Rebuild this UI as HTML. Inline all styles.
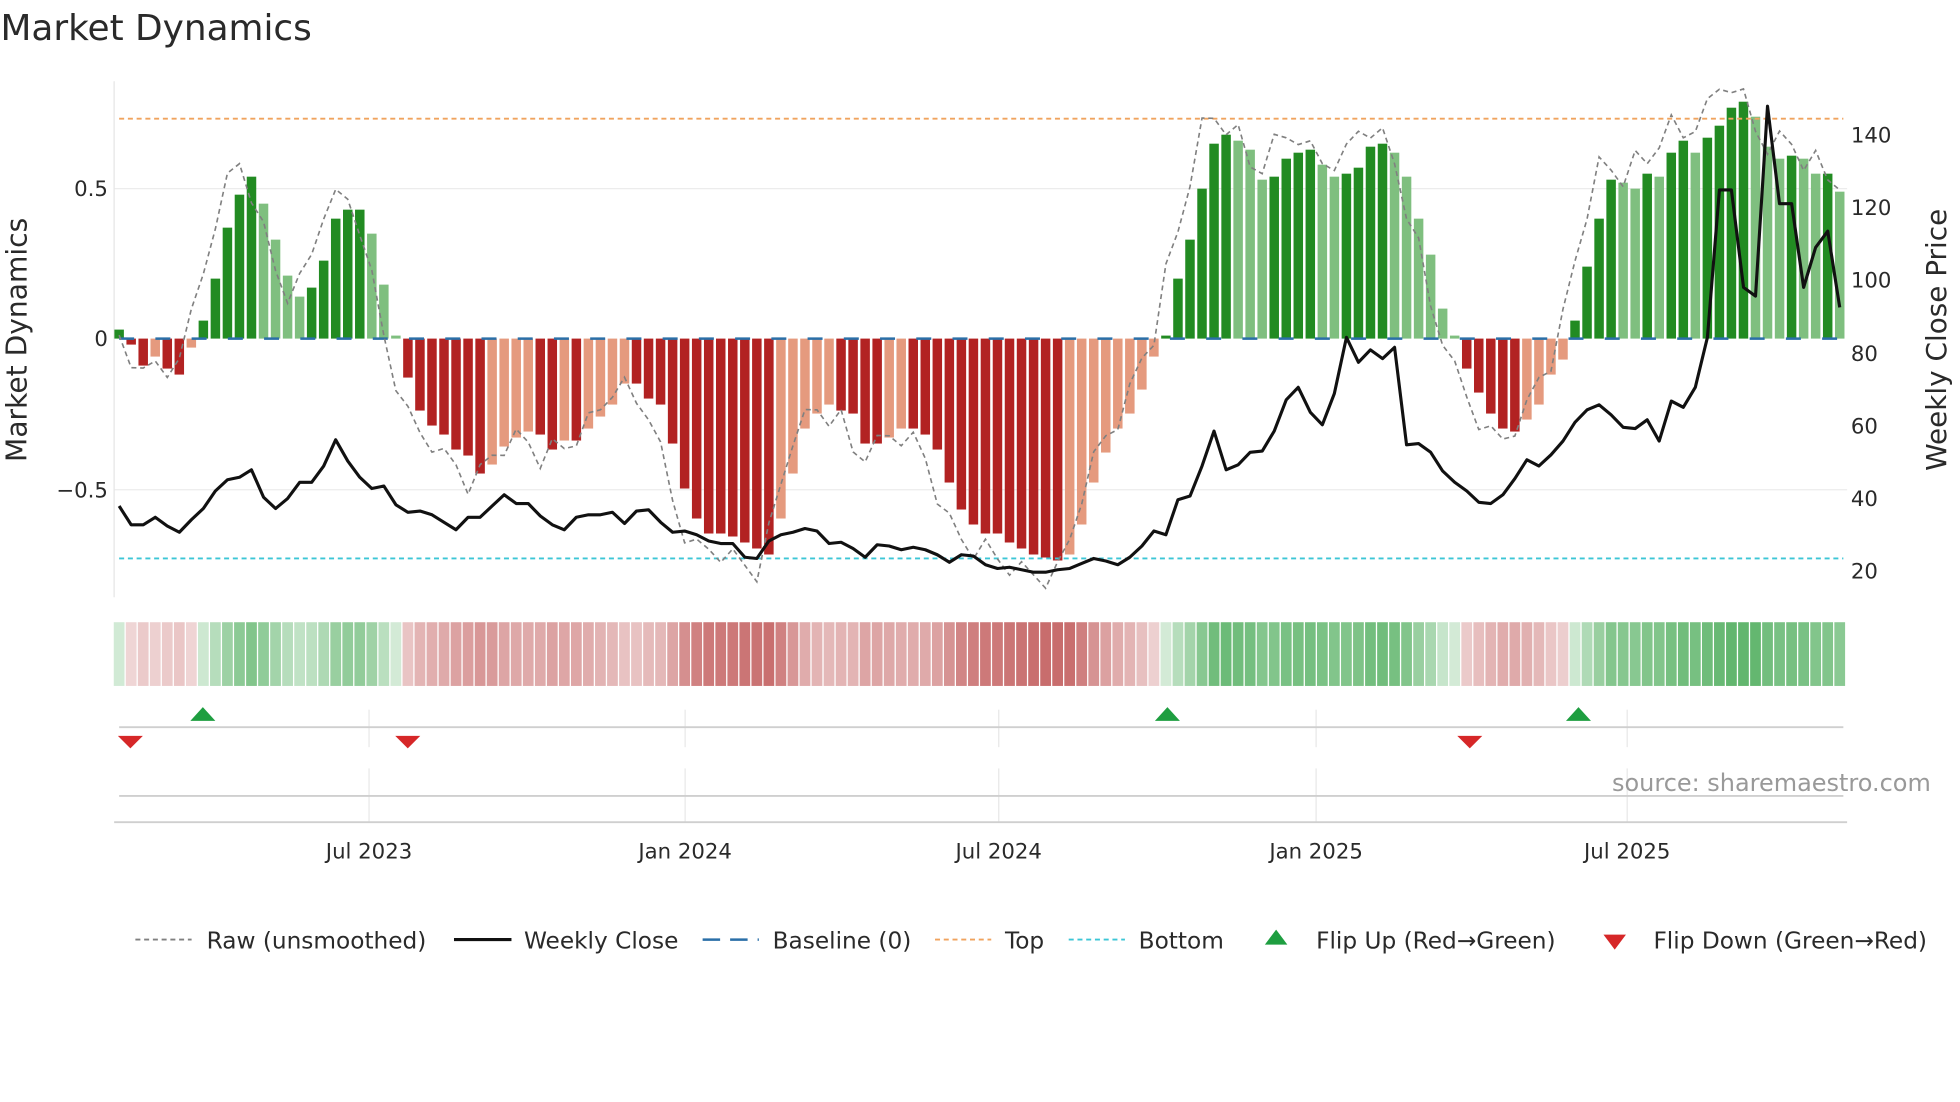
<!DOCTYPE html>
<html><head><meta charset="utf-8"><style>
html,body{margin:0;padding:0;background:#fff;width:1960px;height:1102px;overflow:hidden}
svg{display:block}
text{font-family:"DejaVu Sans","Liberation Sans",sans-serif;fill:#2a2a2a}
</style></head><body>
<svg id="s" width="1960" height="1102" viewBox="0 0 1568 882" xmlns="http://www.w3.org/2000/svg">
<text x="0" y="32" font-size="28.7">Market Dynamics</text>
<line x1="91" y1="151" x2="1478" y2="151" stroke="#ececec" stroke-width="1"/>
<line x1="91" y1="392" x2="1478" y2="392" stroke="#ececec" stroke-width="1"/>
<line x1="91" y1="65" x2="91" y2="478" stroke="#e6e6e6" stroke-width="1"/>
<g id="bars"></g>
<g id="heat"></g>
<line x1="95" y1="95" x2="1475" y2="95" stroke="#f0a35e" stroke-width="1.5" stroke-dasharray="4,3"/>
<line x1="95" y1="447" x2="1475" y2="447" stroke="#3cc6d6" stroke-width="1.5" stroke-dasharray="4,3"/>
<line x1="95" y1="271" x2="1475" y2="271" stroke="#2a6fa8" stroke-width="2" stroke-dasharray="12,17"/>
<polyline id="raw" fill="none" stroke="#808080" stroke-width="1.3" stroke-dasharray="4,3"/>
<polyline id="close" fill="none" stroke="#111" stroke-width="2.5" stroke-linejoin="round"/>
<g font-size="17">
<text x="86" y="157" text-anchor="end">0.5</text>
<text x="86" y="277" text-anchor="end">0</text>
<text x="86" y="398" text-anchor="end">−0.5</text>
<text x="1481" y="114">140</text><text x="1481" y="172">120</text><text x="1481" y="230">100</text>
<text x="1481" y="289">80</text><text x="1481" y="347">60</text><text x="1481" y="405">40</text><text x="1481" y="463">20</text>
</g>
<text transform="translate(21,272) rotate(-90)" font-size="22.5" text-anchor="middle">Market Dynamics</text>
<text transform="translate(1557,272) rotate(-90)" font-size="22.3" text-anchor="middle">Weekly Close Price</text>
<g stroke="#e8e8e8" stroke-width="1">
<line x1="295" y1="568" x2="295" y2="598"/><line x1="548" y1="568" x2="548" y2="598"/><line x1="799" y1="568" x2="799" y2="598"/><line x1="1053" y1="568" x2="1053" y2="598"/><line x1="1302" y1="568" x2="1302" y2="598"/>
<line x1="295" y1="615" x2="295" y2="658"/><line x1="548" y1="615" x2="548" y2="658"/><line x1="799" y1="615" x2="799" y2="658"/><line x1="1053" y1="615" x2="1053" y2="658"/><line x1="1302" y1="615" x2="1302" y2="658"/>
</g>
<line x1="95" y1="582" x2="1475" y2="582" stroke="#cfcfcf" stroke-width="1.5"/>
<line x1="95" y1="637" x2="1475" y2="637" stroke="#cfcfcf" stroke-width="1.5"/>
<line x1="91" y1="658" x2="1478" y2="658" stroke="#cfcfcf" stroke-width="1.5"/>
<g fill="#1e9e40"><polygon points="162,566 152,577 172,577"/><polygon points="934,566 924,577 944,577"/><polygon points="1263,566 1253,577 1273,577"/></g>
<g fill="#d62728"><polygon points="104,599 94,589 114,589"/><polygon points="326,599 316,589 336,589"/><polygon points="1176,599 1166,589 1186,589"/></g>
<text x="1545" y="633" font-size="19.2" text-anchor="end" style="fill:#999">source: sharemaestro.com</text>
<g font-size="17" text-anchor="middle">
<text x="295" y="687">Jul 2023</text><text x="548" y="687">Jan 2024</text><text x="799" y="687">Jul 2024</text><text x="1053" y="687">Jan 2025</text><text x="1302" y="687">Jul 2025</text>
</g>
<g font-size="18.6">
<line x1="108" y1="752" x2="153" y2="752" stroke="#808080" stroke-width="1.5" stroke-dasharray="4,3"/>
<text x="165" y="759">Raw (unsmoothed)</text>
<line x1="363" y1="752" x2="409" y2="752" stroke="#111" stroke-width="2.5"/>
<text x="419" y="759">Weekly Close</text>
<line x1="562" y1="752" x2="607" y2="752" stroke="#2a6fa8" stroke-width="2" stroke-dasharray="14,8"/>
<text x="618" y="759">Baseline (0)</text>
<line x1="748" y1="752" x2="793" y2="752" stroke="#f0a35e" stroke-width="1.5" stroke-dasharray="4,3"/>
<text x="804" y="759">Top</text>
<line x1="855" y1="752" x2="900" y2="752" stroke="#3cc6d6" stroke-width="1.5" stroke-dasharray="4,3"/>
<text x="911" y="759">Bottom</text>
<polygon points="1021,744 1012,756 1030,756" fill="#1e9e40"/>
<text x="1053" y="759">Flip Up (Red→Green)</text>
<polygon points="1292,760 1283,748 1301,748" fill="#d62728"/>
<text x="1323" y="759">Flip Down (Green→Red)</text>
</g>
</svg>
<script>
var v=[0.03,-0.02,-0.09,-0.06,-0.1,-0.12,-0.03,0.06,
0.2,0.37,0.48,0.54,0.45,0.33,0.21,0.14,0.17,0.26,0.4,0.43,0.43,0.35,0.18,0.01,
-0.13,-0.24,-0.29,-0.32,-0.37,-0.39,-0.45,-0.42,-0.36,-0.33,-0.31,-0.32,-0.37,-0.34,-0.34,-0.30,-0.26,-0.22,-0.15,-0.15,-0.2,-0.22,-0.35,-0.5,-0.6,-0.65,-0.65,-0.66,-0.68,-0.7,-0.72,-0.6,-0.45,-0.3,-0.25,-0.22,-0.24,-0.25,-0.35,-0.35,-0.33,-0.3,-0.3,-0.32,-0.37,-0.48,-0.57,-0.62,-0.65,-0.65,-0.68,-0.7,-0.72,-0.73,-0.74,-0.72,-0.62,-0.48,-0.38,-0.3,-0.25,-0.17,-0.06,
0.01,0.2,0.33,0.5,0.65,0.68,0.66,0.63,0.53,0.54,0.6,0.62,0.63,0.58,0.54,0.55,0.57,0.64,0.65,0.62,0.54,0.4,0.28,0.1,0.01,
-0.1,-0.18,-0.25,-0.3,-0.31,-0.27,-0.22,-0.12,-0.07,
0.06,0.24,0.4,0.53,0.52,0.5,0.55,0.54,0.62,0.66,0.62,0.67,0.71,0.77,0.79,0.74,0.64,0.6,0.61,0.6,0.55,0.55,0.49];
var NS="http://www.w3.org/2000/svg",bars=document.getElementById('bars'),heat=document.getElementById('heat');
function el(p,t,a){var e=document.createElementNS(NS,t);for(var k in a)e.setAttribute(k,a[k]);p.appendChild(e);return e;}
var raw=[];
for(var i=0;i<v.length;i++){
 var x=95+9.63*i,y0=271,h=v[i]*240,prev=i?v[i-1]:0,c;
 if(v[i]>=0)c=(v[i]>=prev)?'#228b22':'#7fbf7f';else c=(v[i]<=prev)?'#b22222':'#e59a7e';
 el(bars,'rect',{x:x-3.8,y:h>=0?y0-h:y0,width:7.6,height:Math.max(Math.abs(h),1),fill:c});
 el(heat,'rect',{x:x-4.3,y:498,width:8.6,height:51,fill:v[i]>=0?'#2e9e3e':'#b53a3a','fill-opacity':(0.2+0.55*Math.min(1,Math.abs(v[i])/0.75)).toFixed(2)});
 var n=v[Math.min(i+1,v.length-1)];
 raw.push(x+','+(271-n*1.08*240+(i%3-1)*8).toFixed(1));
}
document.getElementById('raw').setAttribute('points',raw.join(' '));
var cy=[405,420,420,414,421,426,416,407,393,384,382,376,398,407,399,386,386,373,352,369,382,391,389,404,410,409,412,418,424,414,414,405,396,403,403,413,420,424,414,412,412,410,419,409,408,418,426,425,428,433,435,435,446,447,433,428,426,423,425,435,434,439,446,436,437,440,438,440,444,450,444,445,452,455,454,456,458,458,456,455,451,447,449,452,446,437,425,428,400,397,373,345,376,372,362,361,345,320,310,330,340,315,270,290,280,287,278,356,355,362,377,386,393,402,403,396,383,368,373,364,353,338,328,324,332,342,343,336,353,321,326,310,270,152,152,230,237,85,163,163,230,198,185,246];
var pts=[];for(var j=0;j<cy.length;j++)pts.push((95+9.63*j).toFixed(1)+','+cy[j]);
document.getElementById('close').setAttribute('points',pts.join(' '));
</script>
</body></html>
